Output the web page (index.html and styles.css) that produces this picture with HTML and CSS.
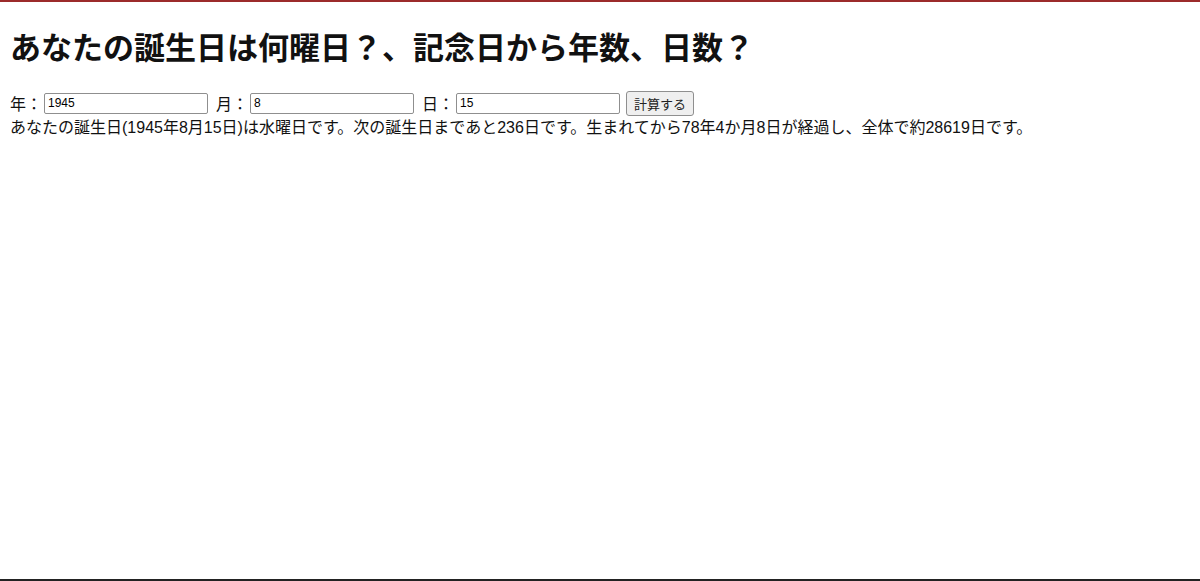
FILE: index.html
```html
<!DOCTYPE html>
<html lang="ja">
<head>
    <meta charset="UTF-8">
    <meta name="viewport" content="width=device-width, initial-scale=1.0">
    <title>誕生日計算</title>
    <link rel="stylesheet" href="styles.css">
</head>
<body>
    <div class="page">
        <h1>あなたの誕生日は何曜日？、記念日から年数、日数？</h1>
        <form id="birthday-form" class="date-form">
            <label for="year">年：</label>
            <input type="text" id="year" value="1945">
            <label for="month">月：</label>
            <input type="text" id="month" value="8">
            <label for="day">日：</label>
            <input type="text" id="day" value="15">
            <button type="button" class="btn">計算する</button>
        </form>
        <p class="result">あなたの誕生日(1945年8月15日)は水曜日です。次の誕生日まであと236日です。生まれてから78年4か月8日が経過し、全体で約28619日です。</p>
    </div>
</body>
</html>
```

FILE: styles.css
```css
html {
    border-top: 2px solid #9c2b2b;
    min-height: 100%;
    box-sizing: border-box;
}
body {
    margin: 8px;
    font-family: "Liberation Sans", Arial, "Noto Sans CJK JP", sans-serif;
    font-size: 16px;
    color: #111;
    background: #fff;
}
body::after {
    content: "";
    position: fixed;
    left: 0;
    right: 0;
    bottom: 0;
    height: 2px;
    background: #222;
}
.page {
    padding-left: 2px;
}
h1 {
    font-size: 31px;
    line-height: 36px;
    font-weight: bold;
    margin: 21px 0 23px;
}
.date-form {
    display: flex;
    align-items: center;
    height: 26px;
}
.date-form label {
    margin-right: 2px;
}
.date-form input[type="text"] {
    width: 164px;
    height: 21px;
    box-sizing: border-box;
    padding: 1px 3px;
    border: 1px solid #8f8f8f;
    border-radius: 2px;
    font-family: "Liberation Sans", Arial, sans-serif;
    font-size: 12px;
    margin-right: 8px;
}
.date-form input[type="text"]:last-of-type {
    margin-right: 6px;
}
.btn {
    height: 25px;
    padding: 1px 7px;
    font-family: "Liberation Sans", Arial, "Noto Sans CJK JP", sans-serif;
    font-size: 13px;
    background-color: #efefef;
    border: 1px solid #8f8f8f;
    border-radius: 3px;
    color: #222;
}
.result {
    margin: 0;
    line-height: 24px;
}
```
